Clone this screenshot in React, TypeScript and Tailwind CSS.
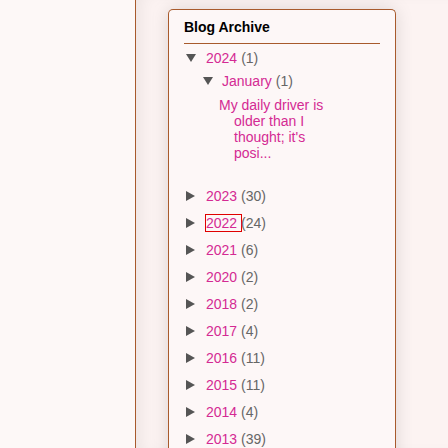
import React from "react"

const years = [
  { y: "2023", n: 30 },
  { y: "2022", n: 24, focus: true },
  { y: "2021", n: 6 },
  { y: "2020", n: 2 },
  { y: "2018", n: 2 },
  { y: "2017", n: 4 },
  { y: "2016", n: 11 },
  { y: "2015", n: 11 },
  { y: "2014", n: 4 },
  { y: "2013", n: 39 },
]

function Down() {
  return (
    <svg width="10" height="8" viewBox="0 0 10 8" className="shrink-0">
      <path d="M0 0 L10 0 L5 8 Z" fill="#555" />
    </svg>
  )
}

function Right() {
  return (
    <svg width="9" height="10" viewBox="0 0 9 10" className="shrink-0">
      <path d="M0 0 L9 5 L0 10 Z" fill="#555" />
    </svg>
  )
}

export default function App() {
  return (
    <div
      className="flex h-[448px] w-[448px] overflow-hidden text-[14px]"
      style={{ fontFamily: '"Liberation Sans", Arial, sans-serif' }}
    >
      {/* sidebar column */}
      <div className="w-[136px] shrink-0 bg-[#fdf8f7] border-r border-[#a85a2c]" />

      {/* main area */}
      <div className="flex-1 bg-[#fcf3f2] pl-[32px] pt-[9px] shadow-[inset_14px_0_18px_-10px_rgba(0,0,0,0.07)]">
        <div className="w-[228px] min-h-[460px] rounded-t-[5px] border border-b-0 border-[#a85a2c] bg-[#fdf7f7] pt-[8px] pl-[15px] pr-[15px] shadow-[0_0_18px_rgba(0,0,0,0.13)]">
          <h2 className="h-[18px] text-[14px] font-bold leading-[18px] text-black">Blog Archive</h2>
          <div className="mt-[7px] h-px bg-[#a85a2c]" />

          {/* 2024 expanded */}
          <div className="mt-[5px] flex h-[18px] items-center pl-[2px] leading-[18px]">
            <Down />
            <span className="ml-[10px] text-[#d42a93]">2024</span>
            <span className="ml-[4px] text-[#666]">(1)</span>
          </div>
          <div className="mt-[5px] flex h-[18px] items-center pl-[19px] leading-[18px]">
            <Down />
            <span className="ml-[9px] text-[#d42a93]">January</span>
            <span className="ml-[4px] text-[#666]">(1)</span>
          </div>
          <div className="mt-[7px] ml-[35px] w-[118px] pl-[15px] -indent-[15px] leading-[16px] text-[#d42a93]">
            My daily driver is older than I thought; it's posi...
          </div>

          {/* collapsed years */}
          <div className="mt-[26px] flex flex-col gap-[9px]">
            {years.map((r) => (
              <div key={r.y} className="flex h-[18px] items-center pl-[2px] leading-[18px]">
                <Right />
                <span
                  className={
                    r.focus
                      ? "ml-[11px] inline-block whitespace-pre leading-[16px] text-[#d42a93] outline outline-1 outline-[#e00000]"
                      : "ml-[11px] whitespace-pre text-[#d42a93]"
                  }
                >
                  {r.y + " "}
                </span>
                <span className="text-[#666]">({r.n})</span>
              </div>
            ))}
          </div>
        </div>
      </div>
    </div>
  )
}
